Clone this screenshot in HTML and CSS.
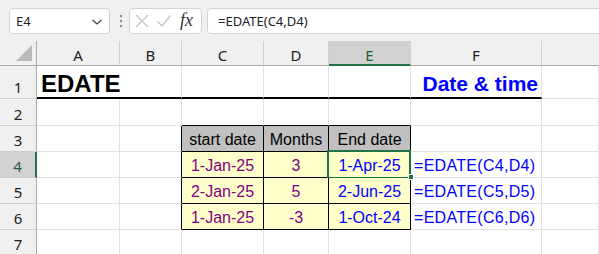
FILE: index.html
```html
<!DOCTYPE html>
<html>
<head>
<meta charset="utf-8">
<link rel="stylesheet" href="styles.css">
</head>
<body>
<div class="toolbar">
  <div class="namebox">
    <span class="name">E4</span>
    <svg class="chev" width="12" height="8" viewBox="0 0 12 8"><polyline points="1.5,2 6,6 10.5,2" fill="none" stroke="#444" stroke-width="1.3"/></svg>
  </div>
  <svg class="dots" width="6" height="16" viewBox="0 0 6 16"><circle cx="3" cy="3" r="1.2" fill="#8a8a8a"/><circle cx="3" cy="8" r="1.2" fill="#8a8a8a"/><circle cx="3" cy="13" r="1.2" fill="#8a8a8a"/></svg>
  <div class="btns">
    <svg width="16" height="16" viewBox="0 0 16 16"><path d="M2 2 L14 14 M14 2 L2 14" stroke="#c4c4c4" stroke-width="1.3" fill="none"/></svg>
    <svg width="16" height="16" viewBox="0 0 16 16"><path d="M1.5 8.5 L6 13 L14.5 2.5" stroke="#c4c4c4" stroke-width="1.3" fill="none"/></svg>
    <span class="fx">fx</span>
  </div>
  <div class="formula">=EDATE(C4,D4)</div>
</div>
<div class="sheet">
  <div class="c hd corner"><svg width="17" height="17" viewBox="0 0 17 17"><polygon points="16,0 16,16 0,16" fill="#b9b9b9"/></svg></div>
  <div class="c hd ch">A</div>
  <div class="c hd ch">B</div>
  <div class="c hd ch">C</div>
  <div class="c hd ch">D</div>
  <div class="c hd ch sel-col">E</div>
  <div class="c hd ch">F</div>
  <div class="c hd ch last"></div>

  <div class="c hd rh">1</div>
  <div class="c r1 nob"><span class="title">EDATE</span></div>
  <div class="c r1"></div>
  <div class="c r1"></div>
  <div class="c r1"></div>
  <div class="c r1"></div>
  <div class="c r1 right"><span class="cat">Date &amp; time</span></div>
  <div class="c"></div>

  <div class="c hd rh">2</div>
  <div class="c"></div>
  <div class="c"></div>
  <div class="c bb"></div>
  <div class="c bb"></div>
  <div class="c bb"></div>
  <div class="c"></div>
  <div class="c"></div>

  <div class="c hd rh">3</div>
  <div class="c"></div>
  <div class="c br"></div>
  <div class="c t th">start date</div>
  <div class="c t th">Months</div>
  <div class="c t th">End date</div>
  <div class="c"></div>
  <div class="c"></div>

  <div class="c hd rh sel-row">4</div>
  <div class="c"></div>
  <div class="c br"></div>
  <div class="c t td pur">1-Jan-25</div>
  <div class="c t td pur">3</div>
  <div class="c t td blu active">1-Apr-25<span class="selbox"></span><span class="handle"></span></div>
  <div class="c fm">=EDATE(C4,D4)</div>
  <div class="c"></div>

  <div class="c hd rh">5</div>
  <div class="c"></div>
  <div class="c br"></div>
  <div class="c t td pur">2-Jan-25</div>
  <div class="c t td pur">5</div>
  <div class="c t td blu">2-Jun-25</div>
  <div class="c fm">=EDATE(C5,D5)</div>
  <div class="c"></div>

  <div class="c hd rh">6</div>
  <div class="c"></div>
  <div class="c br"></div>
  <div class="c t td pur">1-Jan-25</div>
  <div class="c t td pur">-3</div>
  <div class="c t td blu">1-Oct-24</div>
  <div class="c fm">=EDATE(C6,D6)</div>
  <div class="c"></div>

  <div class="c hd rh">7</div>
  <div class="c"></div>
  <div class="c"></div>
  <div class="c"></div>
  <div class="c"></div>
  <div class="c"></div>
  <div class="c"></div>
  <div class="c"></div>
</div>
</body>
</html>
```
FILE: styles.css
```css
* { box-sizing: border-box; }
html, body { margin: 0; padding: 0; }
body {
  width: 599px;
  height: 254px;
  overflow: hidden;
  background: #ffffff;
  font-family: "Liberation Sans", Arial, sans-serif;
}
.toolbar {
  height: 41px;
  background: #f0f0f0;
  display: flex;
  align-items: flex-start;
  padding: 8px 0 0 9px;
  overflow: hidden;
}
.namebox {
  width: 101px;
  height: 26px;
  background: #fff;
  border: 1px solid #d3d3d3;
  border-radius: 4px;
  display: flex;
  align-items: center;
  justify-content: space-between;
  padding: 0 6px 0 6px;
  font-family: "Noto Sans", "Open Sans", sans-serif;
  font-size: 13px;
  color: #222;
}
.chev { margin-top: 1px; }
.dots { margin: 5px 0 0 8px; }
.btns {
  margin-left: 5px;
  width: 73px;
  height: 26px;
  background: #fff;
  border: 1px solid #d3d3d3;
  border-radius: 4px;
  display: flex;
  align-items: center;
  padding: 0 0 0 4px;
  gap: 6px;
}
.fx {
  font-family: "Liberation Serif", "DejaVu Serif", serif;
  font-style: italic;
  font-size: 18px;
  color: #333;
  margin-left: 2px;
  margin-top: -2px;
}
.formula {
  margin-left: 5px;
  flex: 1;
  margin-right: -10px;
  height: 26px;
  background: #fff;
  border: 1px solid #d3d3d3;
  border-radius: 4px;
  display: flex;
  align-items: center;
  padding-left: 10px;
  font-family: "Noto Sans", "Open Sans", sans-serif;
  font-size: 13px;
  color: #222;
}
.sheet {
  display: grid;
  grid-template-columns: 37px 83px 62px 82px 65px 82px 131px 1fr;
  grid-template-rows: 25px 33px 27px 26px 26px 26px 26px 26px;
}
.c {
  border-right: 1px solid #e1e1e1;
  border-bottom: 1px solid #e1e1e1;
  display: flex;
  align-items: flex-end;
  font-size: 16px;
  line-height: 18px;
  padding-bottom: 2px;
  white-space: nowrap;
  position: relative;
}
.hd {
  background: #f0f0f0;
  border-right: 1px solid #cfcfcf;
  border-bottom: 1px solid #bdbdbd;
  font-family: "Noto Sans", "Open Sans", sans-serif;
  font-size: 15px;
  color: #222;
  justify-content: center;
  padding-bottom: 1px;
}
.ch { border-bottom: 1px solid #ababab; }
.ch.last { border-right: none; }
.rh { border-right: 1px solid #ababab; border-bottom: 1px solid #cfcfcf; padding-bottom: 2px; }
.corner { align-items: flex-end; justify-content: flex-end; padding: 0 3px 3px 0; border-bottom: 1px solid #ababab; border-right: 1px solid #ababab; }
.sel-col { background: #d2d2d2; border-bottom: 2px solid #217346; color: #1b5e38; padding-bottom: 0; }
.sel-row { background: #d2d2d2; border-right: 2px solid #217346; color: #1b5e38; }
.r1 { border-bottom: 2px solid #000; padding-bottom: 0; line-height: 26px; }
.nob { border-right: none; }
.title {
  font-weight: bold;
  font-size: 24px;
  color: #000;
  padding-left: 4px;
}
.right { justify-content: flex-end; padding-right: 3px; }
.cat {
  font-weight: bold;
  font-size: 21px;
  color: #0000ff;
}
.bb { border-bottom: 1px solid #000; }
.br { border-right: 1px solid #000; }
.t {
  border-right: 1px solid #000;
  border-bottom: 1px solid #000;
  justify-content: center;
}
.th { background: #c0c0c0; color: #000; }
.td { background: #ffffcc; }
.pur { color: #800080; }
.blu { color: #0000ff; }
.fm { color: #0000ff; padding-left: 3px; letter-spacing: 0.3px; overflow: visible; }
.selbox {
  position: absolute;
  left: -2px;
  top: -2px;
  right: -1px;
  bottom: -2px;
  border: 2px solid #217346;
  pointer-events: none;
}
.handle {
  position: absolute;
  right: -4px;
  bottom: -3px;
  width: 6px;
  height: 6px;
  background: #217346;
  border: 1px solid #fff;
  z-index: 2;
}
```
